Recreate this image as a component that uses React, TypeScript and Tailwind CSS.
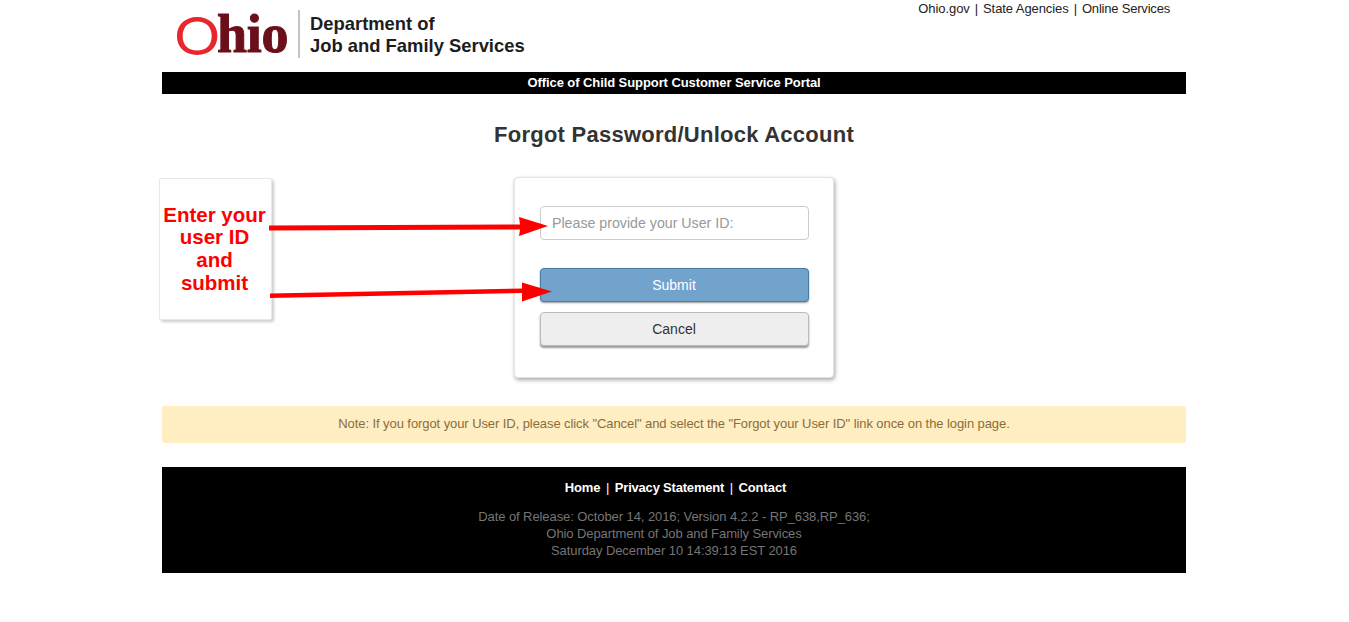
export default function App() {
  return (
    <div className="relative min-h-[622px] bg-white font-['Liberation_Sans',Arial,sans-serif] text-[13px] tracking-[-0.08px] text-[#333]">
      <div className="ml-[162px] w-[1024px]">
        <header className="flex h-[72px] justify-between">
          <div className="flex h-[72px] items-start pl-[14px] pt-[10px]">
            <div className="flex h-[48px] w-[122px] items-center leading-none tracking-normal">
              <span className="w-[42px] scale-x-[1.08] text-center [font-family:Lato,sans-serif] text-[53px] font-normal text-[#e8262d]">O</span>
              <span className="-ml-[1px] font-['Liberation_Serif',serif] text-[54px] font-bold tracking-[-0.3px] text-[#6b0f1c] [-webkit-text-stroke:1px_#6b0f1c]">hio</span>
            </div>
            <div className="h-[48px] w-[2px] bg-[#c4c4c4]" />
            <div className="pl-[10px] pt-[3px] text-[18.4px] font-bold leading-[22px] tracking-normal text-[#1d1d1d]">
              <div>Department of</div>
              <div>Job and Family Services</div>
            </div>
          </div>
          <nav className="flex h-[17px] items-center pr-[16px] text-[#222]">
            <span>Ohio.gov</span>
            <span className="px-[5px]">|</span>
            <span>State Agencies</span>
            <span className="px-[5px]">|</span>
            <span className="tracking-[-0.2px]">Online Services</span>
          </nav>
        </header>

        <div className="flex h-[22px] items-center justify-center bg-black pb-[1px] font-bold text-white">
          Office of Child Support Customer Service Portal
        </div>

        <h1 className="mt-[27px] text-center text-[22px] font-bold leading-[28px] tracking-[0.25px] text-[#333]">
          Forgot Password/Unlock Account
        </h1>

        <div className="ml-[352px] mt-[28px] h-[201px] w-[320px] rounded-[4px] border border-[#e3e3e3] bg-white px-[25px] pt-[28px] tracking-normal shadow-[1px_2px_4px_rgba(0,0,0,0.35)]">
          <input
            readOnly
            placeholder="Please provide your User ID:"
            className="block h-[34px] w-[269px] rounded-[4px] border border-[#ccc] bg-white px-[11px] text-[14.2px] placeholder:text-[#999] outline-none"
          />
          <button className="mt-[28px] block h-[34px] w-[269px] rounded-[4px] border border-[#4a7ba6] bg-[#72a3cd] pr-[1px] text-[14px] text-white shadow-[0_1px_2px_rgba(0,0,0,0.4)]">
            Submit
          </button>
          <button className="mt-[10px] block h-[34px] w-[269px] rounded-[4px] border border-[#bbb] bg-[#eeeeee] pr-[1px] text-[14px] text-[#333] shadow-[0_2px_2px_rgba(0,0,0,0.4)]">
            Cancel
          </button>
        </div>

        <div className="mt-[28px] flex h-[37px] items-center justify-center rounded-[3px] bg-[#ffeec2] pb-[1px] text-[#8a6d3b]">
          Note: If you forgot your User ID, please click "Cancel" and select the "Forgot your User ID" link once on the login page.
        </div>

        <footer className="mt-[24px] h-[106px] bg-black pt-[12px] text-center">
          <div className="flex h-[17px] items-center justify-center pl-[3px] font-bold text-white">
            <span>Home</span>
            <span className="px-[5.5px] font-normal">|</span>
            <span className="tracking-[-0.2px]">Privacy Statement</span>
            <span className="px-[5.5px] font-normal">|</span>
            <span>Contact</span>
          </div>
          <div className="mt-[12px] leading-[17px] text-[#757575]">
            <div>Date of Release: October 14, 2016; Version 4.2.2 - RP_638,RP_636;</div>
            <div>Ohio Department of Job and Family Services</div>
            <div>Saturday December 10 14:39:13 EST 2016</div>
          </div>
        </footer>
      </div>

      <div className="absolute left-[159px] top-[178px] flex h-[142px] w-[113px] flex-col items-center justify-center rounded-[2px] border border-[#e8e8e8] bg-white pr-[2px] text-center text-[20.5px] font-bold leading-[22.7px] tracking-normal text-[#ff0000] shadow-[2px_2px_3px_rgba(0,0,0,0.2)]">
        <div>Enter your</div>
        <div>user ID</div>
        <div>and</div>
        <div>submit</div>
      </div>

      <svg className="pointer-events-none absolute left-0 top-0" width="1349" height="622" viewBox="0 0 1349 622">
        <path d="M269 225.5 L520 224.5 L519 217 L548 226 L519 236 L520 229.5 L269 230.5 Z" fill="#ff0000" />
        <path d="M270 293.5 L522 288.5 L522 282.5 L552 291.5 L522 301.5 L522 293 L270 298 Z" fill="#ff0000" />
      </svg>
    </div>
  );
}
